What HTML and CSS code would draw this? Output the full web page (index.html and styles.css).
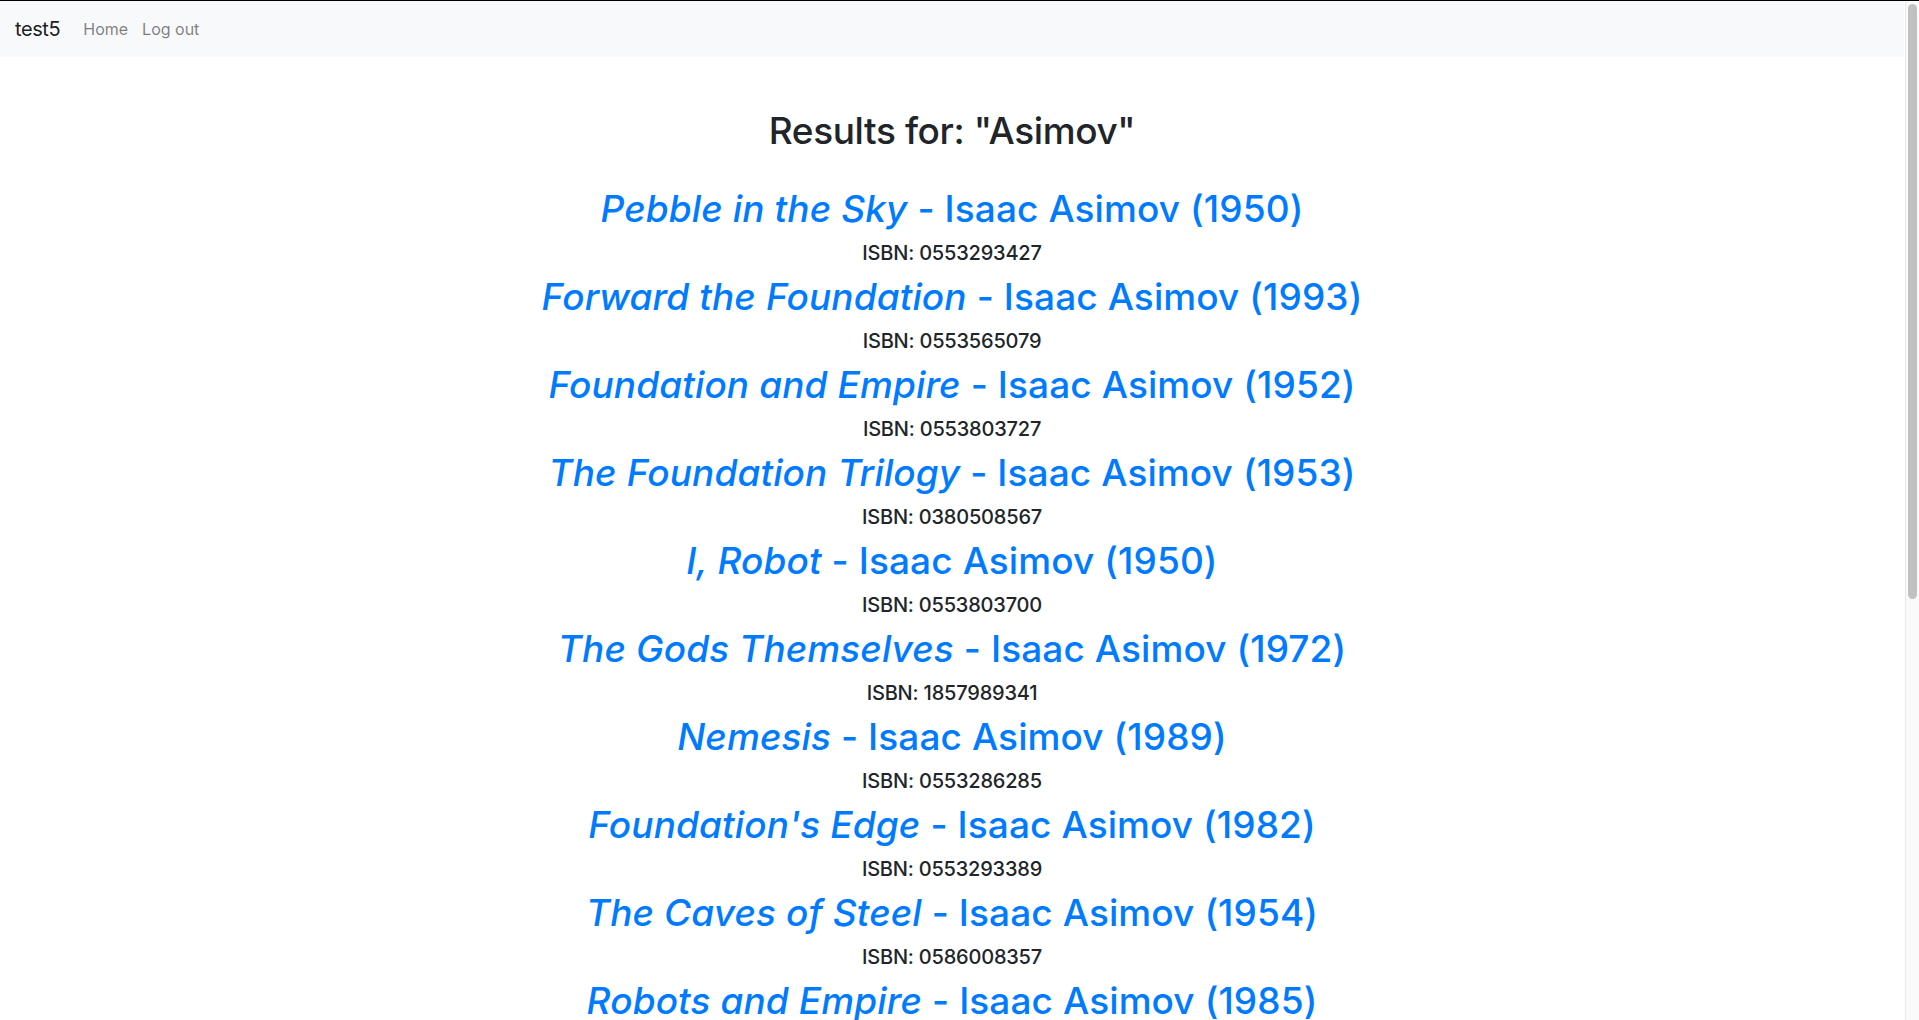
FILE: index.html
```html
<!DOCTYPE html>
<html lang="en">
<head>
<meta charset="utf-8">
<title>test5</title>
<link rel="stylesheet" href="styles.css">
</head>
<body>
<nav class="navbar">
  <a class="brand" href="#">test5</a>
  <a class="nav-link" href="#">Home</a>
  <a class="nav-link" href="#">Log out</a>
</nav>
<main class="container">
  <h2 class="heading">Results for: "Asimov"</h2>
  <ul class="results">
    <li class="result"><a class="title" href="#"><i>Pebble in the Sky</i> - Isaac Asimov (1950)</a><p class="isbn">ISBN: 0553293427</p></li>
    <li class="result"><a class="title" href="#"><i>Forward the Foundation</i> - Isaac Asimov (1993)</a><p class="isbn">ISBN: 0553565079</p></li>
    <li class="result"><a class="title" href="#"><i>Foundation and Empire</i> - Isaac Asimov (1952)</a><p class="isbn">ISBN: 0553803727</p></li>
    <li class="result"><a class="title" href="#"><i>The Foundation Trilogy</i> - Isaac Asimov (1953)</a><p class="isbn">ISBN: 0380508567</p></li>
    <li class="result"><a class="title" href="#"><i>I, Robot</i> - Isaac Asimov (1950)</a><p class="isbn">ISBN: 0553803700</p></li>
    <li class="result"><a class="title" href="#"><i>The Gods Themselves</i> - Isaac Asimov (1972)</a><p class="isbn">ISBN: 1857989341</p></li>
    <li class="result"><a class="title" href="#"><i>Nemesis</i> - Isaac Asimov (1989)</a><p class="isbn">ISBN: 0553286285</p></li>
    <li class="result"><a class="title" href="#"><i>Foundation's Edge</i> - Isaac Asimov (1982)</a><p class="isbn">ISBN: 0553293389</p></li>
    <li class="result"><a class="title" href="#"><i>The Caves of Steel</i> - Isaac Asimov (1954)</a><p class="isbn">ISBN: 0586008357</p></li>
    <li class="result"><a class="title" href="#"><i>Robots and Empire</i> - Isaac Asimov (1985)</a><p class="isbn">ISBN: 0586062009</p></li>
    <li class="result"><a class="title" href="#"><i>Foundation</i> - Isaac Asimov (1951)</a><p class="isbn">ISBN: 0553293354</p></li>
    <li class="result"><a class="title" href="#"><i>Prelude to Foundation</i> - Isaac Asimov (1988)</a><p class="isbn">ISBN: 0553278398</p></li>
    <li class="result"><a class="title" href="#"><i>The Naked Sun</i> - Isaac Asimov (1957)</a><p class="isbn">ISBN: 0553293397</p></li>
    <li class="result"><a class="title" href="#"><i>The End of Eternity</i> - Isaac Asimov (1955)</a><p class="isbn">ISBN: 0765319195</p></li>
    <li class="result"><a class="title" href="#"><i>Second Foundation</i> - Isaac Asimov (1953)</a><p class="isbn">ISBN: 0553293362</p></li>
    <li class="result"><a class="title" href="#"><i>The Robots of Dawn</i> - Isaac Asimov (1983)</a><p class="isbn">ISBN: 0553299492</p></li>
    <li class="result"><a class="title" href="#"><i>The Complete Robot</i> - Isaac Asimov (1982)</a><p class="isbn">ISBN: 0586057242</p></li>
  </ul>
</main>
<div class="scrollbar" aria-hidden="true"><div class="thumb"></div></div>
</body>
</html>
```
FILE: styles.css
```css
html {
  border-top: 1px solid #000;
}
body {
  margin: 0;
  padding-right: 15px;
  font-family: Inter, "Noto Sans", "Liberation Sans", sans-serif;
  font-size: 16px;
  line-height: 1.5;
  color: #212529;
  background: #fff;
}
.scrollbar {
  position: fixed;
  top: 1px;
  right: 0;
  width: 14px;
  height: calc(100vh - 1px);
  background: #fafafa;
  border-left: 1px solid #e8e8e8;
  padding: 3px 3px 0 2px;
  box-sizing: border-box;
}
.thumb {
  width: 9px;
  height: 595px;
  background: #c1c1c1;
  border-radius: 5px;
}
.navbar {
  display: flex;
  align-items: center;
  padding: 8px 15px;
  background: #f8f9fa;
}
.brand {
  font-size: 20px;
  line-height: 30px;
  letter-spacing: -0.4px;
  padding: 5px 0;
  margin-right: 16px;
  color: rgba(0, 0, 0, 0.9);
  text-decoration: none;
}
.nav-link {
  padding: 8px 7px;
  color: rgba(0, 0, 0, 0.5);
  text-decoration: none;
  font-size: 16px;
}
.container {
  display: flex;
  flex-direction: column;
  align-items: center;
  padding: 52px 15px 60px;
  text-align: center;
}
.heading {
  margin: 0 0 32px;
  font-size: 37px;
  font-weight: 500;
  letter-spacing: -0.4px;
  line-height: 1.2;
}
.results {
  list-style: none;
  margin: 0;
  padding: 0;
}
.result {
  display: flex;
  flex-direction: column;
  align-items: center;
}
.title {
  display: block;
  font-size: 37px;
  font-weight: 500;
  letter-spacing: 0.1px;
  line-height: 48px;
  margin-bottom: 8px;
  color: #007bff;
  text-decoration: none;
}
.isbn {
  margin: 0 0 8px;
  font-size: 20px;
  font-weight: 500;
  letter-spacing: -0.2px;
  line-height: 24px;
}
```
